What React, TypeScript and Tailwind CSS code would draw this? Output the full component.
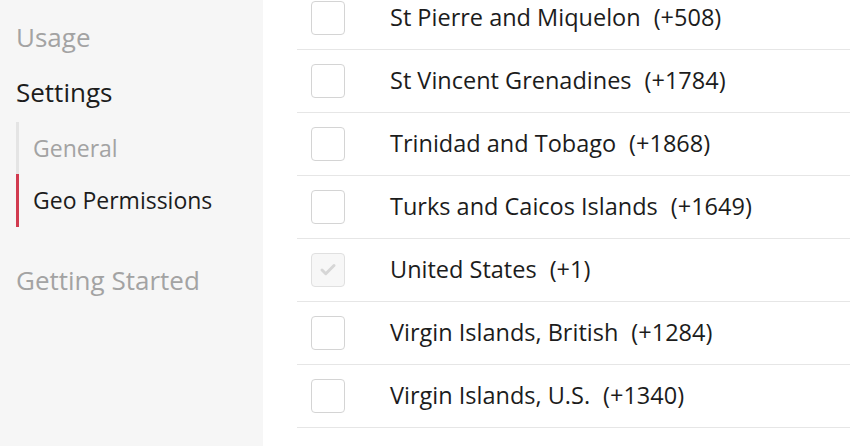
import { Check } from 'lucide-react';

const COUNTRIES = [
  { name: 'St Pierre and Miquelon', code: '+508', checked: false },
  { name: 'St Vincent Grenadines', code: '+1784', checked: false },
  { name: 'Trinidad and Tobago', code: '+1868', checked: false },
  { name: 'Turks and Caicos Islands', code: '+1649', checked: false },
  { name: 'United States', code: '+1', checked: true },
  { name: 'Virgin Islands, British', code: '+1284', checked: false },
  { name: 'Virgin Islands, U.S.', code: '+1340', checked: false },
];

const font = { fontFamily: '"Open Sans", sans-serif' };

export default function App() {
  return (
    <div className="flex w-[850px] h-[446px] overflow-hidden bg-white" style={font}>
      {/* Sidebar */}
      <aside className="w-[263px] shrink-0 bg-[#f6f6f6] pl-4">
        <div className="h-[74px] flex items-center text-[26px] text-[#a3a3a3]">Usage</div>
        <div className="h-[36px] flex items-center text-[26px] text-[#1c1c1c]">Settings</div>
        <div className="mt-3">
          <div className="h-[52px] flex items-center border-l-[3px] border-[#e4e4e4] pl-[14px] text-[23px] text-[#a3a3a3]">
            General
          </div>
          <div className="h-[53px] flex items-center border-l-[3px] border-[#d13a4f] pl-[14px] text-[23px] text-[#1c1c1c]">
            Geo Permissions
          </div>
        </div>
        <div className="mt-[34px] text-[26px] text-[#a3a3a3]">Getting Started</div>
      </aside>

      {/* Country list */}
      <main className="flex-1 pl-[34px]">
        <ul className="-mt-[13px]">
          {COUNTRIES.map((c) => (
            <li key={c.name} className="h-[63px] flex items-center border-b border-[#e6e6e6] pl-[14px]">
              <span
                className={`w-[34px] h-[34px] shrink-0 rounded-[4px] border border-[#d4d4d4] flex items-center justify-center ${
                  c.checked ? 'bg-[#f7f7f7] border-[#e0e0e0]' : 'bg-white'
                }`}
              >
                {c.checked && <Check className="w-[18px] h-[18px] text-[#d6d6d6]" strokeWidth={4} />}
              </span>
              <span className="ml-[45px] text-[23.5px] text-[#1c1c1c] whitespace-nowrap">
                {c.name}
                <span className="ml-[13px]">({c.code})</span>
              </span>
            </li>
          ))}
        </ul>
      </main>
    </div>
  );
}
